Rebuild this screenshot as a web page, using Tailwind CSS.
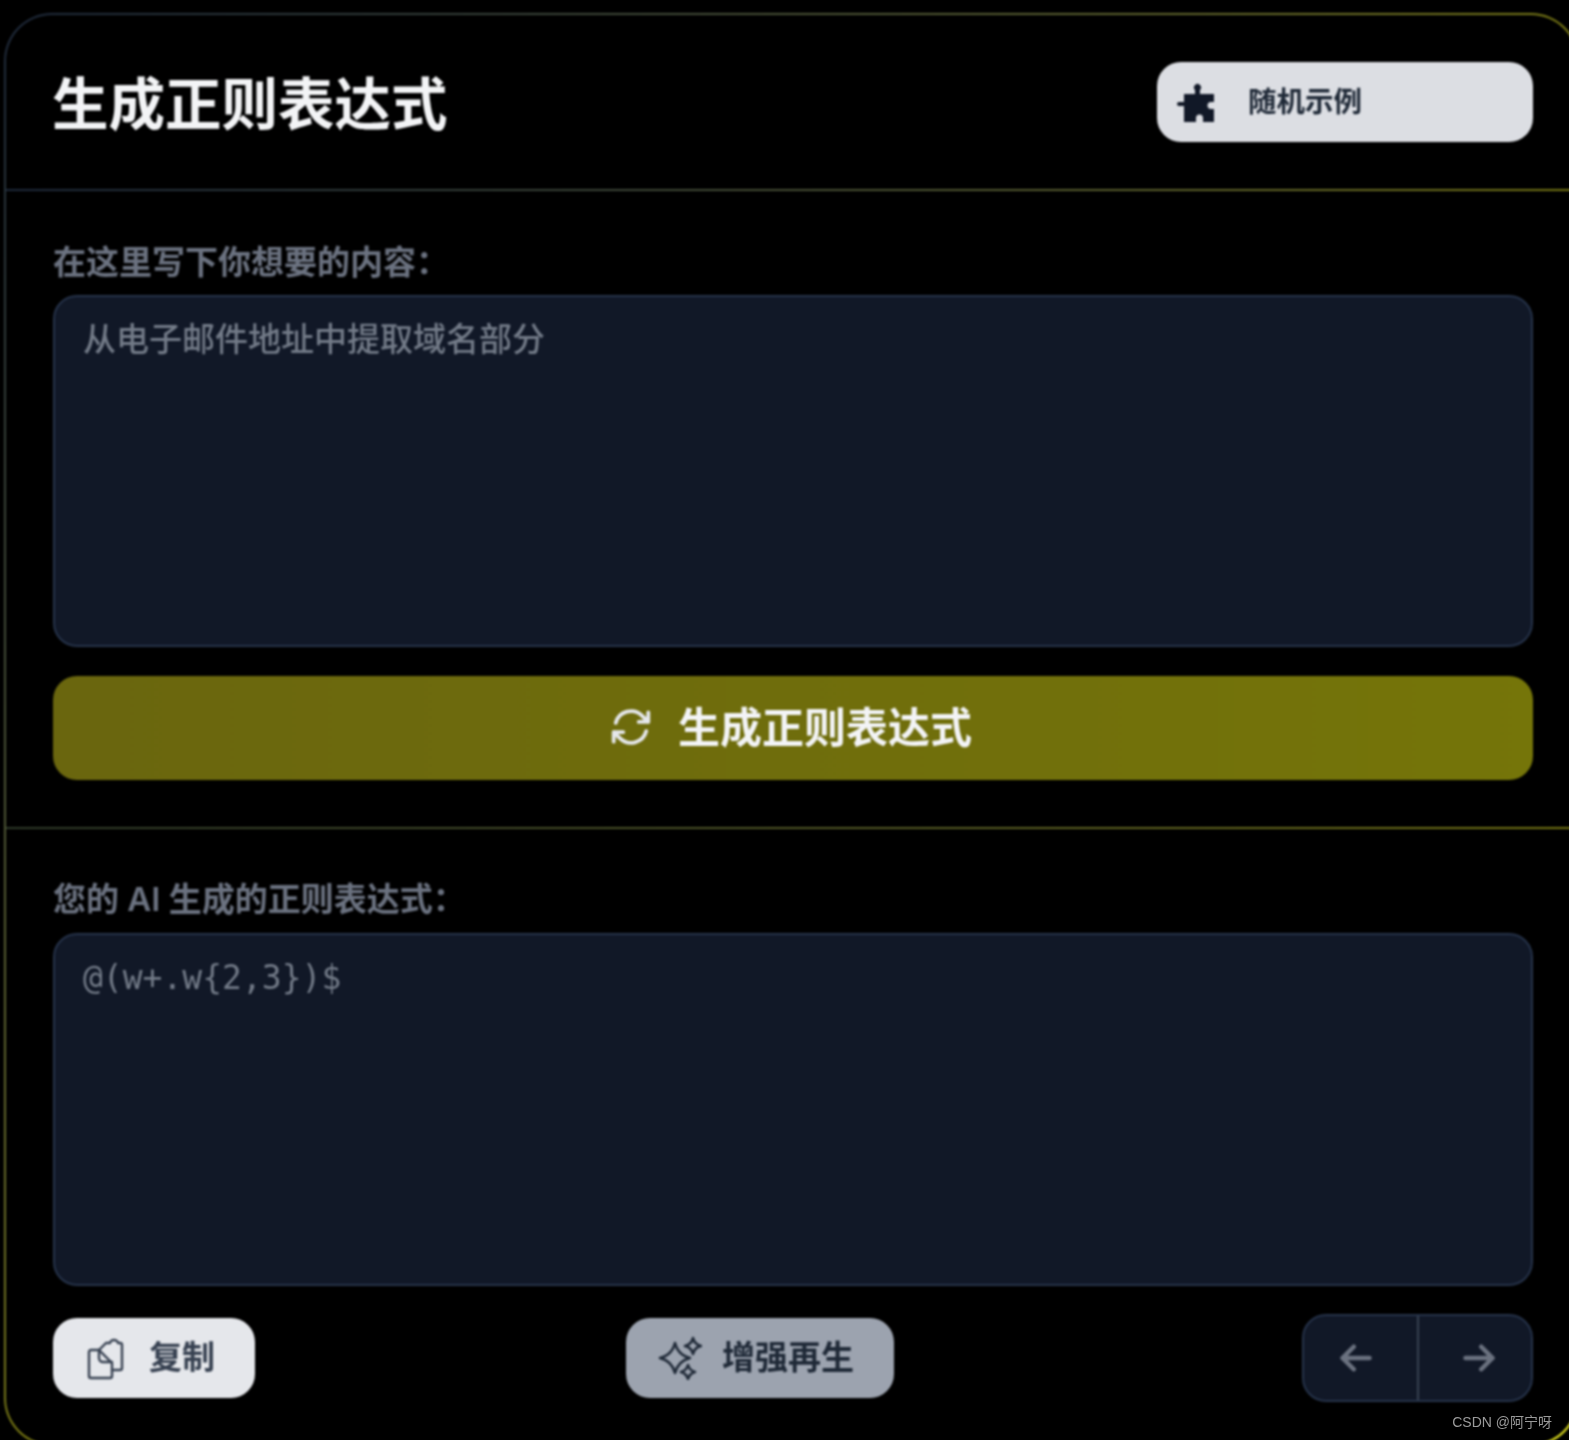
<!DOCTYPE html>
<html lang="zh">
<head>
<meta charset="utf-8">
<script src="https://cdn.jsdelivr.net/npm/@tailwindcss/browser@4"></script>
</head>
<body class="bg-black overflow-hidden">
<div class="relative w-[1569px] h-[1440px] overflow-hidden bg-black font-['Inter','Noto_Sans_CJK_SC',sans-serif]">
  <div class="ml-[4px] mt-[13px] w-[1575px] h-[1433px] rounded-[48px] p-[2px] bg-gradient-to-br from-[#1e293b] via-[#7a7a14] to-[#f0f020] blur-[1.1px]">
    <div class="w-full h-full rounded-[46px] bg-black flex flex-col">
      <header class="h-[174px] shrink-0 pl-[47px] pr-[44px] flex items-center justify-between">
        <h1 class="text-[56.5px] leading-none font-bold text-[#f3f4f6] mt-[6px] -ml-[1px]">生成正则表达式</h1>
        <button class="w-[376px] h-[80px] rounded-[24px] bg-[#dcdee3] flex items-center pl-[17px] gap-[34px] text-[#1f2937] text-[28.5px] font-semibold">
          <svg class="w-[40px] h-[42px]" viewBox="0 0 40 42" fill="#111827"><path d="M10 13H21V9A3.500 3.500 0 1 1 26 9V13H40V21H37A3.500 3.500 0 0 0 37 28H40V41H29V37A3.500 3.500 0 0 0 22 37V41H10V25H5A2 2 0 1 1 5 21H10Z"/></svg>
          <span>随机示例</span>
        </button>
      </header>
      <div class="h-[2px] shrink-0 bg-gradient-to-r from-[#1e293b] to-[#757512]"></div>
      <section class="h-[636px] shrink-0 pl-[47px] pr-[44px] pt-[49px]">
        <label class="block text-[33px] leading-[44px] font-semibold text-[#6b7280]">在这里写下你想要的内容：</label>
        <div class="mt-[11px] h-[352px] rounded-[24px] bg-[#111827] border-2 border-[#26334a] px-[28px] pt-[20px] text-[33px] leading-[44px] font-medium text-[#737b88]">从电子邮件地址中提取域名部分</div>
        <button class="mt-[29px] w-full h-[104px] rounded-[24px] bg-gradient-to-r from-[#6a660e] to-[#757509] flex items-center justify-center gap-[24px] pr-[6px] pb-[2px] text-[42px] font-semibold text-[#f3f4f6]">
          <svg class="w-[46px] h-[46px]" viewBox="0 0 24 24" fill="none" stroke="#e5e7eb" stroke-width="2" stroke-linecap="round" stroke-linejoin="round"><path d="M16.023 9.348h4.992v-.001M2.985 19.644v-4.992m0 0h4.992m-4.993 0 3.181 3.183a8.25 8.25 0 0 0 13.803-3.700M4.031 9.865a8.25 8.25 0 0 1 13.803-3.700l3.181 3.182m0-4.991v4.990"/></svg>
          <span>生成正则表达式</span>
        </button>
      </section>
      <div class="h-[2px] shrink-0 bg-gradient-to-r from-[#2f3a2a] to-[#757512]"></div>
      <section class="flex-1 pl-[47px] pr-[44px] pt-[48px]">
        <label class="block text-[33px] leading-[44px] font-semibold text-[#6b7280]">您的 AI 生成的正则表达式：</label>
        <div class="mt-[12px] h-[353px] rounded-[24px] bg-[#111827] border-2 border-[#26334a] px-[28px] pt-[21px] text-[33px] leading-[44px] font-medium text-[#737b88] font-['DejaVu_Sans_Mono',monospace]">@(w+.w{2,3})$</div>
        <div class="mt-[28px] flex items-center">
          <button class="w-[202px] h-[80px] rounded-[24px] bg-[#e5e7eb] flex items-center pl-[33px] gap-[23px] text-[#374151] text-[33px] font-semibold">
            <svg class="w-[40px] h-[44px]" viewBox="0 0 40 44" fill="none" stroke="#374151" stroke-width="2.4" stroke-linecap="round" stroke-linejoin="round"><path d="M13 14H5a2 2 0 0 0-2 2V40a2 2 0 0 0 2 2H24a2 2 0 0 0 2-2V27L13 14Z"/><path d="M13 14V22a4 4 0 0 0 4 4H26"/><path d="M13 14L20 7H24a4 3 0 0 1 8 0H34a2 2 0 0 1 2 2V32a2 2 0 0 1-2 2H26"/></svg>
            <span>复制</span>
          </button>
          <button class="ml-[371px] w-[268px] h-[80px] rounded-[24px] bg-[#9ca3af] flex items-center pl-[32px] gap-[20px] text-[#1f2937] text-[33px] font-semibold">
            <svg class="w-[44px] h-[44px]" viewBox="0 0 44 44" fill="none" stroke="#1f2937" stroke-width="2.600" stroke-linejoin="round"><path d="M17 7Q20 19 32 22Q20 25 17 37Q14 25 2 22Q14 19 17 7Z"/><path d="M35 2Q36.500 8.500 43 10Q36.500 11.500 35 18Q33.500 11.500 27 10Q33.500 8.500 35 2Z"/><path d="M30 29Q31.500 34.500 37 36Q31.500 37.500 30 43Q28.500 37.500 23 36Q28.500 34.500 30 29Z"/></svg>
            <span>增强再生</span>
          </button>
          <div class="ml-auto w-[231px] h-[88px] rounded-[24px] bg-[#111827] border-2 border-[#26334a] flex items-stretch">
            <button class="w-[115px] border-r-2 border-[#374151] flex items-center justify-center pr-[10px]">
              <svg class="w-[36px] h-[36px]" viewBox="0 0 24 24" fill="none" stroke="#6b7280" stroke-width="3" stroke-linecap="round" stroke-linejoin="round"><path d="M10.500 19.500 3 12m0 0 7.500-7.500M3 12h18"/></svg>
            </button>
            <button class="flex-1 flex items-center justify-center pl-[8px]">
              <svg class="w-[36px] h-[36px]" viewBox="0 0 24 24" fill="none" stroke="#6b7280" stroke-width="3" stroke-linecap="round" stroke-linejoin="round"><path d="M13.500 4.500 21 12m0 0-7.500 7.500M21 12H3"/></svg>
            </button>
          </div>
        </div>
      </section>
    </div>
  </div>
  <span class="absolute right-[17px] top-[1413px] text-[14px] leading-[18px] text-[#9a9a9a] font-['Liberation_Sans','Noto_Sans_CJK_SC',sans-serif]">CSDN @阿宁呀</span>
</div>
</body>
</html>
